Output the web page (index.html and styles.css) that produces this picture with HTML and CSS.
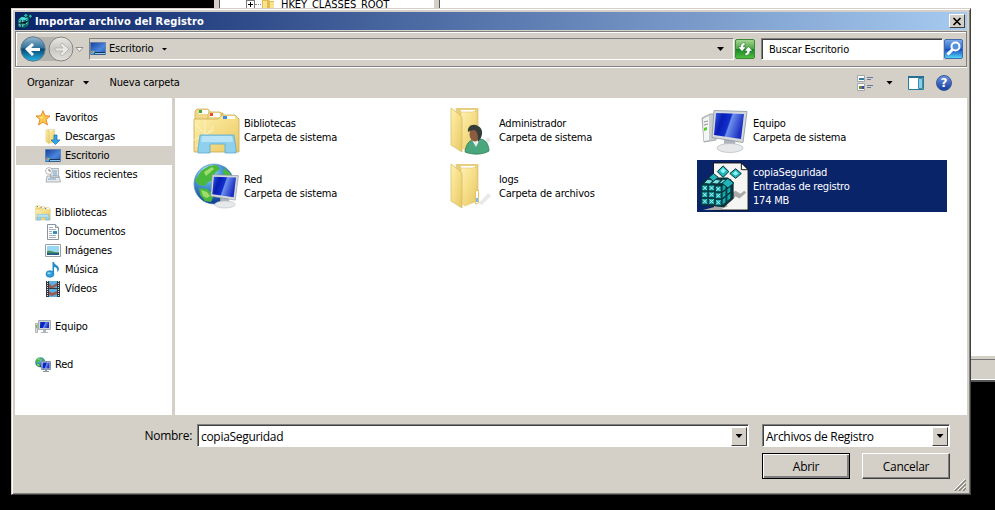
FILE: index.html
```html
<!DOCTYPE html>
<html lang="es"><head><meta charset="utf-8"><title>Importar archivo del Registro</title><link rel="stylesheet" href="styles.css"></head>
<body>
<svg width="0" height="0" class="defs"><defs>
<linearGradient id="fold" x2="1" y2="1"><stop stop-color="#fdf0b0"/><stop offset=".5" stop-color="#f5dd86"/><stop offset="1" stop-color="#e6c766"/></linearGradient>
<linearGradient id="scr" x2="1" y2=".3"><stop stop-color="#2f62e8"/><stop offset=".3" stop-color="#0a1cb4"/><stop offset=".55" stop-color="#1030cc"/><stop offset=".6" stop-color="#6d90ee"/><stop offset="1" stop-color="#1c2fc0"/></linearGradient>
<radialGradient id="globe" cx=".35" cy=".2" r=".8"><stop stop-color="#c9eefb"/><stop offset=".4" stop-color="#4f9edb"/><stop offset="1" stop-color="#0c3a92"/></radialGradient>
<linearGradient id="back" y2="1" x2="0"><stop stop-color="#9bb9ce"/><stop offset=".45" stop-color="#31739f"/><stop offset=".5" stop-color="#07466f"/><stop offset="1" stop-color="#26b5e8"/></linearGradient>
<linearGradient id="fwd" y2="1" x2="0"><stop stop-color="#e8e8e6"/><stop offset=".5" stop-color="#c9c8c4"/><stop offset="1" stop-color="#e3e1dc"/></linearGradient>
<linearGradient id="desk" x2="1" y2="1"><stop stop-color="#173f9c"/><stop offset=".6" stop-color="#4b86dc"/><stop offset="1" stop-color="#2355b0"/></linearGradient>
<symbol id="desktop" viewBox="0 0 16 14"><path fill="url(#desk)" stroke="#547aa5" stroke-width=".7" d="M.5.5h15v12H.5z"/><path fill="#173359" d="M1 10h14v2.5H1z"/><path fill="#8bc7ef" d="M5 11h10v1H5z"/><circle cx="2.5" cy="10.5" r="2" fill="#52a8ee"/><path fill="#f26a38" d="M1 9h1.5v1.5H1z"/><path fill="#8fce4a" d="M3 9h1.3v1.5H3z"/></symbol>
<symbol id="folder" viewBox="0 0 48 48"><path fill="#777" opacity=".16" d="m30 40 9-10 3 3-9 9z"/><path fill="#e9cf7c" stroke="#dcc06a" stroke-width=".7" d="M7 1.500h22V38l-17 3z"/><path fill="#fff" d="M12 3h14v5H12z"/><path fill="url(#fold)" stroke="#e3c873" stroke-width=".6" d="M12 5h11l5-1v34l-12 5-4-3z"/><path fill="url(#fold)" stroke="#d6b95f" stroke-width=".7" d="m2 1 9 7q2 1 2 4v33L2 38z"/></symbol>
<symbol id="library" viewBox="0 0 48 48"><path fill="#f0d888" stroke="#cfae57" stroke-width=".8" d="M2 13V4l2-2h11l3 4h12v7z"/><path fill="#fff" d="M6 3h9v4H6z"/><path fill="#39ae4b" d="M6 3h3v3H6z"/><path fill="#f3dc90" stroke="#cfae57" stroke-width=".8" d="M15 14V7l2-2h10l3 4h12v5z"/><path fill="#fff" d="M17 6h10v4H17z"/><path fill="#ec4939" d="M17 6h3v3h-3z"/><path fill="url(#fold)" stroke="#c9a850" stroke-width=".8" d="M1 12h24l4-4h13l4 4v33H1z"/><path fill="#fff" d="M30 9h12v3H30z"/><path fill="#3b8de1" d="M30 9h4v3h-4z"/><path stroke="#fffce8" d="m2 17 20 20M12 14v26M1 33l20-10M3 40l18-21" opacity=".6"/><path fill="#8fd0ee" stroke="#5aa9d0" stroke-width=".8" d="M7 28h34l2 14v4H32V37H17v9H5v-4z"/><path fill="#d3f1fc" opacity=".6" d="M9 29h30l1 6H8z"/></symbol>
<symbol id="monitor" viewBox="0 0 48 48"><path fill="#afb5bb" d="m23 32 11 2 1 7H23z"/><ellipse cx="29" cy="41" rx="13" ry="4.500" fill="#e6e8ea" stroke="#b6bbc0" stroke-width=".7"/><path fill="#d5d9dc" stroke="#8d969e" stroke-width=".8" d="m13 3.500 33 1-4 31-31-5z"/><path fill="url(#scr)" d="m15 6 28 1-3 25-27-4z"/></symbol>
<symbol id="pc" viewBox="0 0 48 48"><path fill="#c9cdd0" stroke="#8b9297" stroke-width=".7" d="m1 11 8-4h6v26l-12 2z"/><path fill="#f4f5f5" d="m2 12 6-3v24l-5 1z"/><path stroke="#777" stroke-width=".8" d="m3 15 4-1m-4 4 4-1"/><path fill="#56cd31" d="m3 21 3-1v3l-3 1z"/><use href="#monitor"/></symbol>
<symbol id="world" viewBox="0 0 48 48"><circle cx="21" cy="21" r="20" fill="url(#globe)" stroke="#5c8fc0" stroke-width=".7"/><path fill="#49b83c" d="m8 8 8-5 8-1 3 4-5 4-2 7-5 2-3 4-6-1-4-4zM31 5l6 5 3 10-7-4-3-6zM6 25l8 1 7 6-3 7-6-1-5-6z"/><path fill="#9fdc6a" d="m11 9 8-5 2 2-8 7zM8 27l6 2 3 4-3 2-4-2z"/></symbol>
<symbol id="net" viewBox="0 0 48 48"><use href="#world"/><svg x="9" y="9" width="38" height="38" viewBox="0 0 48 48"><use href="#monitor"/></svg></symbol>
<symbol id="cube" viewBox="0 0 20 20"><path fill="#087d83" stroke="#04262d" d="m1 8 5-4 9 1v10l-5 4-9-1z"/><path fill="#49dce0" d="m2 8 4-3 8 1-4 3z"/><path stroke="#b8f3f1" stroke-width=".9" fill="none" stroke-dasharray="2 1" d="M2 11h8l4-3M2 14.500h8l4-3M4 9v8m3-8v9"/><path stroke="#04262d" stroke-width=".8" d="M2 12.800h8l4-3M5.500 9v9M10 9v9"/><path fill="#20b3b7" stroke="#01181c" d="m11 0 3 3-3 3-3-3zM16.500 1l3 3-3 3-2.500-3z"/></symbol>
<symbol id="regfile" viewBox="0 0 52 52"><path fill="#f5f5f3" stroke="#111" d="M14 1h29l7 7v42H14z"/><path fill="#fff" stroke="#111" d="M43 1v7h7z"/><path fill="#aaa" d="m14 47 12-4 3 3-9 4H3zM30 34l7-4 5 3 4-3 2 2-7 6-4-2-5 5-6-1 5-4z"/>
<path fill="#0b3238" d="m1 23 8-7h20l6 5v17l-10 9-24-2z"/><g fill="#13a8ae" stroke="#073f46"><path d="M2 24h6v6H2zm7 0h6v6H9zm7 1h6v6h-6zM2 31h6v6H2zm7 0h6v6H9zm7 1h6v6h-6zM2 38h6v6H2zm7 0h6v6H9zm7 1h6v6h-6z"/><path d="m23 25 4-3v6l-4 3zm5-4 4-3v6l-4 3zm-5 11 4-3v6l-4 3zm5-4 4-3v6l-4 3zm-5 11 4-3v6l-4 3zm5-4 4-3v6l-4 3z"/><path fill="#77e1df" d="m4 22 4-4 6 1-4 4zm8 0 4-4 6 1-4 4zm8 0 4-4 7 1-5 4z"/></g><g fill="none" stroke="#bffcfa" stroke-width=".9"><path d="m3 25 4 4m0-4-4 4m7-4 4 4m0-4-4 4m7-3 4 4m0-4-4 4M3 32l4 4m0-4-4 4m7-4 4 4m0-4-4 4m7-3 4 4m0-4-4 4M3 39l4 4m0-4-4 4m7-4 4 4m0-4-4 4m7-3 4 4m0-4-4 4"/></g><g fill="#22b4b9" stroke="#052d34"><path d="m24 4 6 6-6 6-6-6zm13 3 6 5-6 5-6-5zm-8 10 6 5-6 5-6-5zM14 12l5 4-5 4-5-4z"/><path fill="#83f5f2" stroke="none" d="m24 6 3 3-3 3-3-3zm13 3 3 3-3 2-3-2z"/></g></symbol>
</defs></svg>
<div class="desktop">
<div class="regedit"><div class="regtree"><i class="plus"></i><i class="dots"></i><svg width="15" height="13" viewBox="0 0 15 13"><path fill="#e3bc4e" d="M1 0h6l2 3h4v8H1z"/><path fill="#f9e292" d="M2 3h4v8H2zM9 4h4v6H9z"/></svg><span>HKEY_CLASSES_ROOT</span></div><div class="regvalues"></div><div class="regstatus"></div></div>
<main class="dialog">
<header><svg width="16" height="16" viewBox="0 0 20 20"><use href="#cube"/></svg><b>Importar archivo del Registro</b><button class="close"><svg width="10" height="9" viewBox="0 0 10 9"><path stroke="#000" stroke-width="1.7" d="m1.500 1 7 7m0-7-7 7"/></svg></button></header>
<nav>
<svg class="arrows" width="67" height="28" viewBox="0 0 67 28"><rect x="1" y="2" width="51" height="24" rx="12" fill="#b5b3ae"/><circle cx="13" cy="14" r="12.200" fill="url(#back)" stroke="#617989"/><path fill="#fff" d="m5 14 7-6 2 2-3 3h9v3h-9l3 3-2 2z"/><circle cx="41" cy="14" r="12" fill="url(#fwd)" stroke="#85847f"/><path fill="#e9e8e4" stroke="#aaa9a5" stroke-width=".7" d="m49 14-7-6-2 2 3 3h-8v3h8l-3 3 2 2z"/><path fill="#fff" stroke="#777" stroke-width=".8" d="M56 12.500h7l-3.500 4z"/></svg>
<div class="address"><svg width="16" height="14"><use href="#desktop"/></svg><span>Escritorio</span><i class="tri small"></i><i class="tri end"></i></div>
<div class="refresh"><svg width="20" height="20" viewBox="0 0 20 20"><path fill="#fff" stroke="#276b2c" stroke-width=".5" d="M10 3.500C7 3.500 5.500 5 5.500 8H3l4 4.500L11 8H8.500c0-1.500.5-2 1.500-2zM10 16.500c3 0 5-1.500 5-4.500h2.500l-4-4.500L9.500 12H12c0 1.500-.5 2-2 2z"/></svg></div>
<div class="search">Buscar Escritorio</div><div class="find"><svg width="18" height="18" viewBox="0 0 18 18"><circle cx="10.500" cy="6.500" r="4" fill="#5392dd" stroke="#fff" stroke-width="2"/><path stroke="#fff" stroke-width="3" d="m7.500 9.500-5 5"/></svg></div>
</nav>
<div class="tools"><span class="org">Organizar</span><i class="tri"></i><span class="new">Nueva carpeta</span>
<svg class="views" width="16" height="16" viewBox="0 0 16 16"><path fill="#fff" stroke="#a3a8ae" d="M.5.5h7v6h-7zm0 8h7v7h-7z"/><path fill="#347c9f" d="M2 3h5v2H2z"/><path fill="#3b9d43" d="M2 11h2v3H2z"/><path fill="#d3533d" d="M4 11h1.500v3H4z"/><path fill="#2f4fae" d="M5 11h2v3H5z"/><path stroke="#647b9b" d="M10 2.500h6m-6 2h4m-4 6h6m-6 2h4"/></svg><i class="tri viewtri"></i>
<svg class="pane" width="16" height="14" viewBox="0 0 16 14"><path fill="#fff" stroke="#297aa3" d="M.5.5h15v13H.5z"/><path fill="#276f94" d="M0 0h16v2H0z"/><path fill="#83d1ea" stroke="#438aa3" d="M10.500 2.500h4v10h-4z"/></svg>
<div class="help">?</div></div>
<div class="content"><aside>
<div class="side root"><svg width="16" height="16" viewBox="0 0 16 16"><path fill="#ffc94a" stroke="#e88a29" d="m8 .8 2 5 5 .2-4 3.500 1.500 5.400L8 12l-4.500 3L5 9.500 1 6l5-.2z"/><path fill="#fff1a3" d="M8 3 7 7l-3-.2 3 2.400z"/></svg>Favoritos</div>
<div class="side"><svg width="16" height="16"><svg width="16" height="16" viewBox="0 0 48 48"><use href="#folder"/></svg><path fill="#31a5e8" stroke="#1670ad" stroke-width=".7" d="M9 6h3v5h3l-4.500 4.500L6 11h3z"/></svg>Descargas</div>
<div class="side active"><svg width="16" height="14"><use href="#desktop"/></svg>Escritorio</div>
<div class="side"><svg width="16" height="16" viewBox="0 0 16 16"><path fill="#e5e9ec" stroke="#8f999f" stroke-width=".7" d="M5.500 1.500h8v9h-8zM2 9h12l1.500 6H1z"/><path stroke="#6f9fc7" d="M8 4h4M8 6h4M8 8h4M3 12h8"/><circle cx="4" cy="4" r="3.400" fill="#fff" stroke="#999" stroke-width=".7"/><path stroke="#777" fill="none" d="M4 2v2h2"/></svg>Sitios recientes</div>
<div class="gap"></div>
<div class="side root"><svg width="16" height="16" viewBox="0 0 48 48"><use href="#library"/></svg>Bibliotecas</div>
<div class="side"><svg width="16" height="16" viewBox="0 0 16 16"><path fill="#fff" stroke="#89959d" d="M2.500.5h8l3 3v12h-11z"/><path fill="#dce3e8" stroke="#89959d" d="M10.500.5v3h3"/><path stroke="#a3b0bc" d="M4 3.500h4m-4 2h7m-7 2h3m-3 2h3m-3 2h7m-7 2h7"/><path fill="#348dbf" d="M8 7h4v3H8z"/></svg>Documentos</div>
<div class="side"><svg width="16" height="14" viewBox="0 0 16 14"><path fill="#fff" stroke="#99a0a5" d="M.5.5h15v12H.5z"/><path fill="#97d8f3" d="M2 2h12v9H2z"/><path fill="#47935b" d="M2 7c5-1 7 2 12 1v3H2z"/><path fill="#245e82" d="M2 9h12v2H2z"/></svg>Imágenes</div>
<div class="side"><svg width="16" height="16" viewBox="0 0 16 16"><ellipse cx="5" cy="12" rx="4" ry="3.300" fill="#319edb" stroke="#1774ac" stroke-width=".7"/><path fill="#218ac9" d="M7.500 0H9c0 3 5 3 5 7 0 2-2 3-2 3 1.500-4-2-5-3-5v7H7.500z"/><ellipse cx="4" cy="11.200" rx="1.800" ry="1" fill="#8fdaf5"/></svg>Música</div>
<div class="side"><svg width="16" height="16" viewBox="0 0 16 16"><path fill="#323840" d="M1 0h14v16H1z"/><path fill="#58b1de" d="M4 0h8v7H4zm0 8h8v8H4z"/><path fill="#9c5b54" d="m4 2 3 3 5-3v3L8 7H4zm0 8 3 2 5-2v3l-5 2-3-1z"/><path stroke="#ddd" stroke-width="1" stroke-dasharray="1 1" d="M2.500 0v16m11-16v16"/></svg>Vídeos</div>
<div class="gap"></div><div class="side root"><svg width="16" height="16" viewBox="0 0 16 16"><path fill="#ddd" stroke="#999" stroke-width=".7" d="M.5 4.500h2v9h-2z"/><path fill="#52cf38" d="M1 6h1v3H1z"/><path fill="#d2d5d8" stroke="#a5acb2" d="M3.500 1.500h12v9h-12z"/><path fill="url(#scr)" d="M5 3h9v6H5z"/><path fill="#aeb4ba" d="M8 11h3v2h2v1H6v-1h2z"/></svg>Equipo</div>
<div class="gap"></div><div class="side root"><svg width="16" height="16" viewBox="0 0 16 16"><svg width="12" height="12" viewBox="0 0 48 48"><use href="#world"/></svg><path fill="#ccd3d9" stroke="#8794a8" d="M6.500 4.500h9v8h-9z"/><path fill="url(#scr)" d="M7.500 5.500h7v6h-7z"/><path fill="#89949f" d="M10 13h2v1h2v1H8v-1h2z"/></svg>Red</div>
</aside><section class="files">
<div class="file c1"><svg width="48" height="48"><use href="#library"/></svg><p>Bibliotecas<br>Carpeta de sistema</p></div>
<div class="file c2"><svg width="48" height="48" viewBox="0 0 48 48"><use href="#folder"/><path fill="#4aa67c" stroke="#2b7652" stroke-width=".7" d="M16 45c1-9 5-12 10-13h6c5 1 8 6 8 12-6 4-17 4-24 1z"/><path fill="#eee" d="m23 33 4 7 4-8z"/><ellipse cx="26" cy="27" rx="5.500" ry="7.500" fill="#8b5c41"/><path fill="#353d38" d="M19 25c-1-6 5-9 10-6 6 3 5 11 0 16 0-6 0-11-4-12-3 0-4 1-6 2z"/></svg><p>Administrador<br>Carpeta de sistema</p></div>
<div class="file c3"><svg width="48" height="48"><use href="#pc"/></svg><p>Equipo<br>Carpeta de sistema</p></div>
<div class="file c1"><svg width="48" height="48"><use href="#net"/></svg><p>Red<br>Carpeta de sistema</p></div>
<div class="file c2"><svg width="48" height="48" viewBox="0 0 48 48"><use href="#folder"/><path fill="#fff" stroke="#d9ba55" stroke-width=".8" d="m26.500 28 3-1v13l-3 1z"/><path stroke="#4aa3e6" stroke-width="1.500" d="M28 35v4"/></svg><p>logs<br>Carpeta de archivos</p></div>
<div class="file c3 selected"><svg width="50" height="50"><use href="#regfile"/></svg><p>copiaSeguridad<br>Entradas de registro<br>174 MB</p></div>
</section></div>
<footer><div class="fields"><label>Nombre:</label><div class="combo name"><span>copiaSeguridad</span><button class="drop"><i class="tri"></i></button></div><div class="combo type"><span>Archivos de Registro</span><button class="drop"><i class="tri"></i></button></div></div><div class="buttons"><button class="btn primary">Abrir</button><button class="btn">Cancelar</button></div><svg class="grip" width="12" height="12" viewBox="0 0 12 12"><path stroke="#fff" d="M0 11 11 0M4 11l7-7M8 11l3-3"/><path stroke="#85827c" stroke-width="1.500" d="M1 12 12 1M5 12l7-7M9 12l3-3"/></svg></footer>
</main></div></body></html>
```
FILE: styles.css
```css
*{box-sizing:border-box}
body{margin:0;background:#000;color:#000;font:11px/14px "DejaVu Sans Condensed","DejaVu Sans",sans-serif;letter-spacing:-.2px;overflow:hidden}
svg{display:block;flex:none}.defs{position:absolute}button{font:inherit;color:inherit;letter-spacing:inherit;padding:0;border-radius:0}i{display:block;flex:none}
.desktop{position:relative;width:995px;height:510px;overflow:hidden}
.regedit{position:absolute;left:214px;top:0;width:781px;height:382px;background:#d4d0c8;border-left:1px solid #d4d0c8;border-bottom:2px solid #555;display:grid;grid-template-columns:215px 1fr;grid-template-rows:356px 21px;column-gap:5px;row-gap:3px;padding-left:4px}
.regtree{background:#fff;border-left:1px solid #555;display:flex;height:356px;padding-left:26px;line-height:9px}.plus{width:9px;height:9px;border:1px solid #777;background:linear-gradient(#000,#000) 50%/5px 1px no-repeat,linear-gradient(#000,#000) 50%/1px 5px no-repeat}.dots{width:6px;height:5px;border-bottom:1px dotted #888}.regtree svg{margin-top:-2px}.regtree span{margin-left:5px;letter-spacing:-.05px}
.regvalues{background:#fff;border-left:1px solid #555}.regstatus{grid-column:1/3;border-top:1px solid #777;border-bottom:1px solid #fff}
.dialog{position:absolute;left:11px;top:8px;width:960px;height:487px;background:#d4d0c8;border:1px solid;border-color:#d4d0c8 #404040 #404040 #d4d0c8;box-shadow:inset 1px 1px #fff,inset -1px -1px #808080;padding:3px;display:flex;flex-direction:column}
header{height:18px;background:linear-gradient(90deg,#0a246a,#a6caf0);color:#fff;display:flex;align-items:center;padding:0 2px;flex:none}header b{font:bold 11px "DejaVu Sans Condensed",sans-serif;margin-left:2px;letter-spacing:.14px}.close{margin-left:auto;width:16px;height:14px;background:#d4d0c8;border:1px solid;border-color:#fff #404040 #404040 #fff;display:grid;place-items:center}
nav{height:36px;margin-top:1px;border:1px solid #808080;box-shadow:inset 1px 1px #fff,0 1px #fff;display:flex;align-items:center;padding-left:4px;flex:none;width:952px}
.arrows{margin-right:2px}.address{height:22px;width:645px;border:1px solid;border-color:#808080 #fff #fff #808080;display:flex;align-items:center}.address span{margin-left:3px}.tri{width:7px;height:4px;background:#000;clip-path:polygon(0 0,100% 0,50% 100%)}.tri.small{width:6px;height:3px;margin-left:8px}.tri.end{margin-left:auto;margin-right:9px}
.refresh{width:20px;height:20px;margin-left:1px;border:1px solid #3b8b39;border-radius:2px;background:linear-gradient(#a3d691,#4ca53f 50%,#148522 51%,#4ebe3e);overflow:hidden;margin-right:6px}.refresh svg{margin:-1px}
.search{width:182px;height:22px;background:#fff;border:1px solid;border-color:#808080 #fff #fff #808080;box-shadow:inset 1px 1px #404040;padding:4px 7px}.find{width:19px;height:20px;background:linear-gradient(#7ba8e8,#2864cb 50%,#1a49ba 51%,#50d4f8);border:1px solid #416cad;border-radius:2px;margin-left:1px}
.tools{height:31px;display:flex;align-items:center;padding-left:12px;flex:none}.tools .tri{margin-left:9px}.new{margin-left:20px}.views{margin-left:auto}.tools .viewtri{margin-left:13px;margin-right:15px}.help{width:16px;height:16px;border-radius:50%;background:linear-gradient(#6b92dc,#173da0);border:1px solid #34579c;color:#fff;font:bold 12px/14px "DejaVu Sans",sans-serif;text-align:center;margin:0 15px 0 12px}
.content{height:317px;display:flex;gap:3px;flex:none;width:952px}.content aside{width:157px;background:#fff;padding:10px 0 0 1px}.side{height:19px;display:flex;align-items:center;gap:4px;padding-left:29px}.side.root{padding-left:19px}.side.active{background:#d4d0c8}.gap{height:19px}
.files{width:792px;background:#fff;padding:6px 20px 0 16px;display:grid;grid-template-columns:254px 252px 250px;grid-template-rows:52px 52px;row-gap:4px}.file{display:flex;align-items:center;padding:2px 0 0 2px}.file p{margin:0 0 0 3px}.file.c2{padding-left:4px}.file.c2 p{margin-left:2px}.file.c3{padding-left:4px}.file.c3 p{margin-left:4px}.file.selected{background:#0a246a;color:#fff;padding-left:3px}.file.selected p{margin-left:3px}
footer{position:relative;flex:1;font:12px/15px "Open Sans","Noto Sans",sans-serif;letter-spacing:-.3px}.fields,.buttons{display:flex}.fields{padding-top:9px}label{width:177px;text-align:right;padding-top:4px;margin-right:5px}.combo{height:23px;display:flex;background:#fff;border:1px solid;border-color:#808080 #fff #fff #808080;box-shadow:inset 1px 1px #404040;padding:2px 1px 1px 3px;align-items:center}.combo span{flex:1}.name{width:552px}.type{width:188px;margin-left:13px}.drop{width:16px;height:19px;background:#d4d0c8;border:1px solid;border-color:#fff #404040 #404040 #fff;display:grid;place-items:center}.buttons{padding:6px 0 0 747px;gap:12px}.btn{width:88px;height:26px;background:#d4d0c8;border:1px solid;border-color:#fff #404040 #404040 #fff;box-shadow:inset -1px -1px #808080}.primary{border-color:#000;box-shadow:inset 1px 1px #fff,inset -2px -2px #808080}.grip{position:absolute;right:1px;bottom:0}
```
